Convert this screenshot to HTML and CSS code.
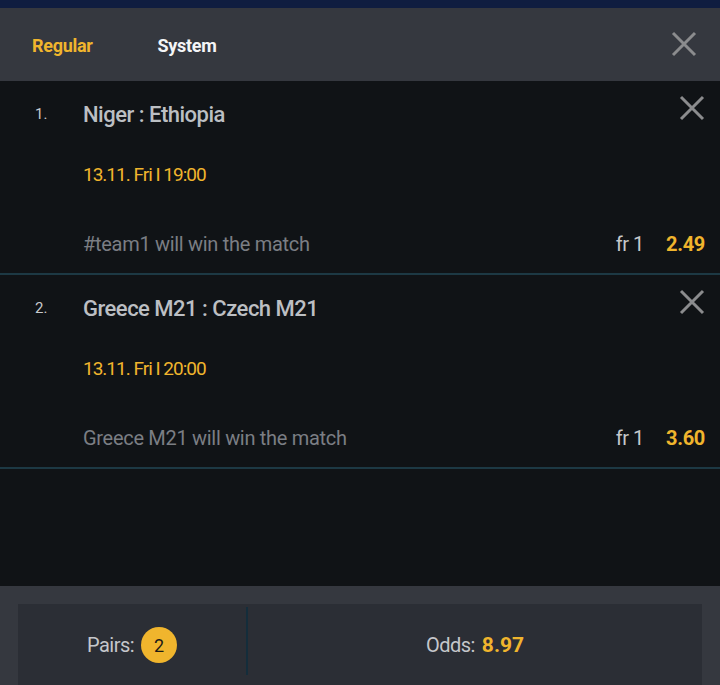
FILE: index.html
```html
<!DOCTYPE html>
<html lang="en">
<head>
<meta charset="utf-8">
<title>Bet slip</title>
<link rel="stylesheet" href="styles.css">
</head>
<body>
<div class="app">
  <div class="topstrip"></div>
  <header class="tabs">
    <span class="tab active">Regular</span>
    <span class="tab">System</span>
    <svg class="close close-head" viewBox="0 0 26 26" width="26" height="26"><path d="M2 2L24 24M24 2L2 24" stroke="#8b8c8e" stroke-width="3" fill="none"/></svg>
  </header>
  <main class="list">
    <section class="bet">
      <div class="bet-head">
        <span class="num">1.</span>
        <span class="title">Niger : Ethiopia</span>
        <svg class="close close-item" viewBox="0 0 26 26" width="26" height="26"><path d="M2 2L24 24M24 2L2 24" stroke="#8b8c8e" stroke-width="3" fill="none"/></svg>
      </div>
      <div class="date">13.11. Fri I 19:00</div>
      <div class="pick">
        <span class="pick-text">#team1 will win the match</span>
        <span class="fr">fr 1</span>
        <span class="odd">2.49</span>
      </div>
    </section>
    <section class="bet">
      <div class="bet-head">
        <span class="num">2.</span>
        <span class="title">Greece M21 : Czech M21</span>
        <svg class="close close-item" viewBox="0 0 26 26" width="26" height="26"><path d="M2 2L24 24M24 2L2 24" stroke="#8b8c8e" stroke-width="3" fill="none"/></svg>
      </div>
      <div class="date">13.11. Fri I 20:00</div>
      <div class="pick">
        <span class="pick-text">Greece M21 will win the match</span>
        <span class="fr">fr 1</span>
        <span class="odd">3.60</span>
      </div>
    </section>
  </main>
  <footer class="summary">
    <div class="summary-box">
      <div class="cell cell-pairs">
        <span class="label">Pairs:</span>
        <span class="badge">2</span>
      </div>
      <div class="sep"></div>
      <div class="cell cell-odds">
        <span class="label">Odds:</span>
        <span class="total">8.97</span>
      </div>
    </div>
  </footer>
</div>
</body>
</html>
```

FILE: styles.css
```css
* { box-sizing: border-box; }
html, body { margin: 0; padding: 0; }
body {
  background: #101316;
  font-family: Roboto, "Noto Sans", sans-serif;
  width: 720px;
  height: 685px;
  overflow: hidden;
}
.app {
  display: flex;
  flex-direction: column;
  height: 685px;
}
.topstrip {
  height: 8px;
  background: #0f1d40;
}
.tabs {
  height: 73px;
  background: #35383f;
  display: flex;
  align-items: center;
  padding: 0 23px 0 32px;
}
.tab {
  font-weight: 700;
  font-size: 18px;
  color: #f4f5f7;
  letter-spacing: -0.3px;
  margin-right: 65px;
  margin-top: 1px;
}
.tab.active { color: #f0b52d; }
.close-head { margin-left: auto; margin-top: -2px; width: 26px; height: 26px; }
.list {
  flex: 1;
  background: #101316;
}
.bet {
  border-bottom: 2px solid #1d3944;
  height: 194px;
  padding: 0 15px 0 0;
  display: flex;
  flex-direction: column;
}
.bet-head {
  display: flex;
  align-items: center;
  height: 66px;
}
.num {
  width: 83px;
  padding-left: 35px;
  font-size: 15px;
  color: #c8cacd;
}
.title {
  font-size: 22px;
  color: #bcbfc3;
  font-weight: 500;
  letter-spacing: -0.5px;
}
.close-item {
  margin-left: auto;
  margin-right: 0;
  margin-top: -12px;
}
.date {
  margin-left: 83px;
  height: 56px;
  line-height: 56px;
  font-size: 19px;
  color: #f0b52d;
  letter-spacing: -1px;
}
.pick {
  display: flex;
  align-items: center;
  margin-left: 83px;
  margin-top: 25px;
  height: 32px;
}
.pick-text {
  font-size: 20px;
  color: #7b7e84;
  letter-spacing: -0.3px;
}
.fr {
  margin-left: auto;
  font-size: 20px;
  color: #c6c8cb;
  letter-spacing: -0.4px;
}
.odd {
  margin-left: 22px;
  font-size: 20px;
  font-weight: 700;
  color: #f0b52d;
  letter-spacing: -0.3px;
}
.summary {
  background: #35383f;
  height: 99px;
  padding: 18px 18px 0 18px;
}
.summary-box {
  background: #2b2e35;
  height: 82px;
  display: flex;
  align-items: center;
}
.cell {
  display: flex;
  align-items: center;
  justify-content: center;
  height: 100%;
}
.cell-pairs { width: 228px; }
.cell-odds { flex: 1; }
.sep {
  width: 2px;
  height: 68px;
  margin-top: -8px;
  background: #142d3b;
}
.label {
  font-size: 20px;
  color: #c5c7cb;
  letter-spacing: -0.5px;
}
.badge {
  width: 36px;
  height: 36px;
  border-radius: 50%;
  background: #f0b52d;
  color: #1c1a16;
  display: flex;
  align-items: center;
  justify-content: center;
  font-size: 18px;
  margin-left: 7px;
}
.total {
  font-size: 21px;
  font-weight: 700;
  color: #f0b52d;
  margin-left: 7px;
}
```
